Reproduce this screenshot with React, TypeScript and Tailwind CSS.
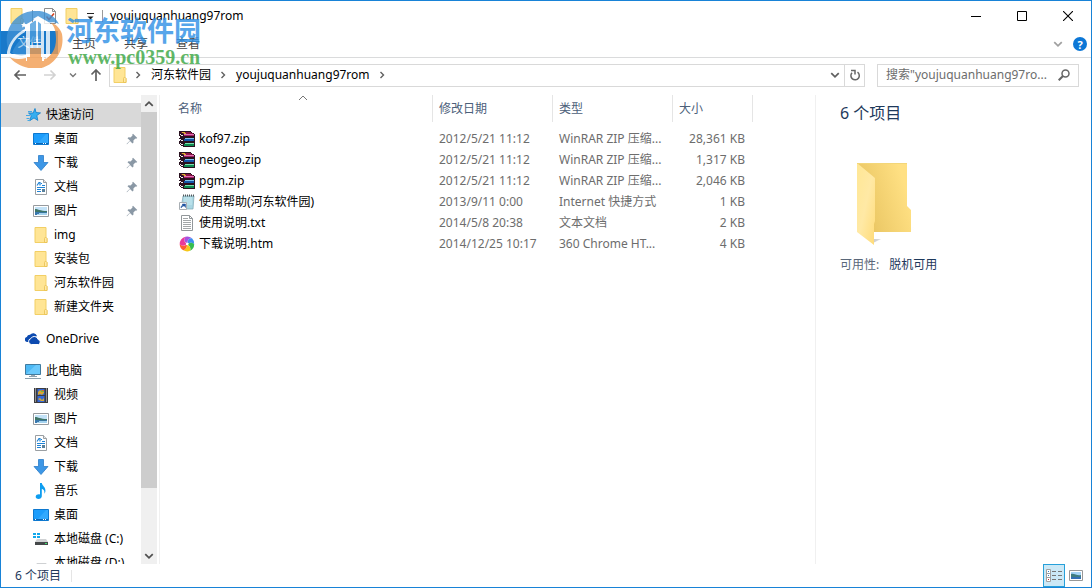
import React from "react";

type IconProps = { className?: string };

const Folder = ({ className = "h-4 w-4" }: IconProps) => (
  <svg viewBox="0 0 16 16" className={className} aria-hidden="true">
    <path d="M2 .5h11v10l1 1v4H2z" fill="#ffe595" stroke="#f2cf65" />
    <path d="M11.500 15.500v-4l1-1.500 1.500 1.500v4z" fill="#ffe9a8" stroke="#e9c04e" strokeWidth=".8" />
  </svg>
);

const Star = () => (
  <svg viewBox="0 0 16 16" className="h-4 w-4" aria-hidden="true">
    <path d="M10 1.500l1 4 4.500.4-3.700 2.600 1 4.900-3.800-2.500-4.300 2.800 1.600-5L3.500 6h4.700z" fill="#36aef0" stroke="#1b86cf" strokeWidth=".9" />
    <path d="M3 4.500h4M1 8.500h4M1.500 11.500h3M2.500 13.500h2" stroke="#45a9e4" strokeWidth="1" />
  </svg>
);

const Desktop = () => (
  <svg viewBox="0 0 16 16" className="h-4 w-4" aria-hidden="true">
    <path d="M.5 2.500h15v11H.5z" fill="#1c9dfc" stroke="#0d78cf" />
    <path d="M5 12L13 3h2v9z" fill="#3fb0ff" opacity=".6" />
    <path d="M1 12.500h14" stroke="#0b66b5" />
    <path d="M2 12.500h1M10 12.500h1M12 12.500h1" stroke="#fff" />
  </svg>
);

const Download = () => (
  <svg viewBox="0 0 16 16" className="h-4 w-4" aria-hidden="true">
    <path d="M5.500 .5h5v7h4.500L8 15.500 1 7.500h4.500z" fill="#3d97e6" stroke="#2b7cc9" strokeWidth=".8" />
  </svg>
);

const Doc = () => (
  <svg viewBox="0 0 16 16" className="h-4 w-4" aria-hidden="true">
    <path d="M2.500 .5h8l3 3v12h-11z" fill="#fff" stroke="#9a9fa3" />
    <path d="M10.500 .5v3h3" fill="#e8e8e8" stroke="#9a9fa3" />
    <path d="M4 6.500l2-3h1v3M8 4.500h1M9 6.500h3M4 8.500h8M4 10.500h4M4 12.500h4" stroke="#1f83d6" strokeWidth="1.200" fill="none" />
    <path d="M9 10h3v3H9z" fill="#59809b" />
  </svg>
);

const Picture = () => (
  <svg viewBox="0 0 16 16" className="h-4 w-4" aria-hidden="true">
    <path d="M.5 2.500h15v11H.5z" fill="#fff" stroke="#969a9e" />
    <path d="M2 4h12v8H2z" fill="#c3e2f7" />
    <path d="M2 6c3 0 5 2 12 2v2H2z" fill="#3f7567" />
    <path d="M2 9c4 0 7 .5 12 0v3H2z" fill="#3a78ad" />
    <path d="M6 10.500h8M4 11.500h10" stroke="#a4d2ee" />
  </svg>
);

const Cloud = () => (
  <svg viewBox="0 0 16 16" className="h-4 w-4" aria-hidden="true">
    <path d="M4 11H2a2.500 2.500 0 0 1-.2-4.900A3.300 3.300 0 0 1 5 3.800 4 4 0 0 1 12 5" fill="#0c4ab0" />
    <path d="M6.500 13.500a3 3 0 0 1-.7-5.900 3.900 3.900 0 0 1 7.300.9 2.600 2.600 0 0 1 .4 5z" fill="#0c4ab0" stroke="#fff" strokeWidth="1" />
  </svg>
);

const Computer = () => (
  <svg viewBox="0 0 16 16" className="h-4 w-4" aria-hidden="true">
    <path d="M.5 1.500h15v10H.5z" fill="#4db9f5" stroke="#417b9f" />
    <path d="M1 11L11 2h4v9z" fill="#77d0ff" opacity=".7" />
    <path d="M6 12h4v1H6z" fill="#9aa8b2" />
    <path d="M4 13.500h8M0 15.500h16" stroke="#8ba0ae" />
  </svg>
);

const Video = () => (
  <svg viewBox="0 0 16 16" className="h-4 w-4" aria-hidden="true">
    <path d="M1 1h14v15H1z" fill="#3c3c3f" />
    <path d="M2.500 1.500v14M13.500 1.500v14" stroke="#e8e8e8" strokeDasharray="1 1" />
    <path d="M4.500 2h7v6h-7zM4.500 9h7v6h-7z" fill="#3568d8" />
    <path d="M5 5l2-2 2 2 2-2v3L9 8 7 7 5 8zM5 12l2-1 2 2 2-2v3H8z" fill="#d8a631" />
    <path d="M8 3h3v2H8z" fill="#7db33d" />
    <path d="M9 3h2v1H9z" fill="#e25a36" />
  </svg>
);

const Music = () => (
  <svg viewBox="0 0 16 16" className="h-4 w-4" aria-hidden="true">
    <path d="M7 0h1.800c.4 3 4.200 4 3.600 8.500-.1.900-.6 1.700-1.100 2.200.6-2.800-.5-4-2.500-5v7.500c0 1.600-1.500 2.800-3.300 2.800S2.500 15 2.700 13.500c.2-1.700 2.400-2.700 4.300-2z" fill="#0d9df0" />
  </svg>
);

const Drive = ({ system = false }: { system?: boolean }) => (
  <svg viewBox="0 0 16 16" className="h-4 w-4" aria-hidden="true">
    {system && <path d="M0 2h3v2H0zM4 2h3v2H4zM0 5h3v2H0zM4 5h3v2H4z" fill="#12a8ec" />}
    <path d="M4 8h9l2 3H2z" fill="#cfd1d3" />
    <path d="M2 11h13v3H2z" fill="#45484a" />
    <path d="M12 12.500h2" stroke="#3ee06c" />
  </svg>
);

const Pin = () => (
  <svg viewBox="0 0 12 12" className="h-3 w-3" aria-hidden="true">
    <path d="M7 .8L11.300 5l-1.200.7-.7-.2-2 2 .1 2-1 1L4 8 1 11.200.5 11 4 7.500 1.500 5.200l1-.9 2 .1 2-2-.2-.8z" fill="#8a98a5" />
  </svg>
);

const Rar = () => (
  <svg viewBox="0 0 16 16" className="h-4 w-4" shapeRendering="crispEdges" aria-hidden="true">
    <path d="M0 0h11l5 3v3l-1 1 1 1v3l-1 1 1 1v3H5l-5-3v-3l1-1-1-1V7l1-1-1-1z" fill="#2a1220" />
    <path d="M1 1h10l4 2H5z" fill="#8a1446" />
    <path d="M5 3h10v1H5z" fill="#e072b5" />
    <path d="M5 4h10v1H5z" fill="#a01b62" />
    <path d="M6 7h9v1H6z" fill="#7cc4ee" />
    <path d="M5 8h10v2H5z" fill="#1456a8" />
    <path d="M6 12h9v1H6z" fill="#7ce0ae" />
    <path d="M5 13h10v2H5z" fill="#0d8a50" />
    <path d="M1 3h1v1H1zM2 4h2v1H2zM1 8h1v1H1zM2 9h2v1H2zM1 12h1v1H1zM2 13h2v1H2z" fill="#f3edf2" />
    <path d="M3 1h3v1H3zM5 2h2v1H5z" fill="#d9b52e" />
  </svg>
);

const Shortcut = () => (
  <svg viewBox="0 0 16 16" className="h-4 w-4" aria-hidden="true">
    <path d="M4 2h11l-1 13H2z" fill="#a9d6e2" stroke="#7fa6b1" strokeWidth=".7" />
    <path d="M5 4h8M5 6h8M5 8h8M5 10h8" stroke="#d7f3f8" strokeWidth=".7" />
    <path d="M4 1.500h11" stroke="#51585c" strokeWidth="2" strokeDasharray="1 1" />
    <path d="M.5 8.500h7v7h-7z" fill="#fff" stroke="#a8aeb3" />
    <path d="M2 14c0-2 1-3 2.500-3H3.500v-1H6.500v3.500L5.500 12C4 12 3 12.500 2 14z" fill="#2155a0" stroke="#2155a0" strokeWidth=".5" />
  </svg>
);

const TextFile = () => (
  <svg viewBox="0 0 16 16" className="h-4 w-4" aria-hidden="true">
    <path d="M2.500 .5h8l3 3v12h-11z" fill="#fff" stroke="#92979a" />
    <path d="M10.500 .5v3h3" fill="none" stroke="#92979a" />
    <path d="M4 3.500h5M4 5.500h8M4 7.500h8M4 9.500h8M4 11.500h8M4 13.500h8" stroke="#a2a6a8" />
  </svg>
);

const Browser = () => (
  <svg viewBox="0 0 16 16" className="h-4 w-4" aria-hidden="true">
    <path d="M8 7C5 6.500 4.500 3 6.500.7A7.300 7.300 0 0 1 13 2.300C10.500 2 8.500 4 8.500 6.500z" fill="#a552e0" />
    <path d="M8.500 7C8.500 4 10.500 1.900 13 2.300A7.300 7.300 0 0 1 15.200 8.500C14 6.500 11 6 9 7.500z" fill="#3d8ff0" />
    <path d="M9 8c2-2 5-1.500 6.200.5A7.300 7.300 0 0 1 11 14.800C12 12.500 11 10 9 9z" fill="#35bd50" />
    <path d="M8.800 9c2.200 1 3.200 3.500 2.200 5.800A7.300 7.300 0 0 1 4.300 14.300C6.500 13.500 8 11.500 8 9.200z" fill="#f5c719" />
    <path d="M8 9c0 2.500-1.500 4.500-3.700 5.300A7.300 7.300 0 0 1 .7 8.500C2.500 10 5.500 10 7.300 8.700z" fill="#ff5a32" />
    <path d="M7.300 8.500C5.500 10 2.500 10 .7 8.500A7.300 7.300 0 0 1 6.500.7C4.700 3 5 6 7.500 7.300z" fill="#e9389a" />
    <circle cx="8.200" cy="8" r="1.300" fill="#fff" />
  </svg>
);

const Arrow = ({ className }: IconProps) => (
  <svg viewBox="0 0 14 14" className={className} fill="none" stroke="currentColor" strokeWidth="1.700" aria-hidden="true">
    <path d="M13 7H2M6.500 2.500L2 7l4.500 4.500" />
  </svg>
);

const Chevron = ({ className }: IconProps) => (
  <svg viewBox="0 0 8 8" className={className} fill="none" stroke="currentColor" strokeWidth="1.400" aria-hidden="true">
    <path d="M1 2.500l3 3 3-3" />
  </svg>
);

type NavEntry = { label: string; icon: React.ReactNode; pinned?: boolean };

const quickItems: NavEntry[] = [
  { label: "桌面", icon: <Desktop />, pinned: true },
  { label: "下载", icon: <Download />, pinned: true },
  { label: "文档", icon: <Doc />, pinned: true },
  { label: "图片", icon: <Picture />, pinned: true },
  { label: "img", icon: <Folder /> },
  { label: "安装包", icon: <Folder /> },
  { label: "河东软件园", icon: <Folder /> },
  { label: "新建文件夹", icon: <Folder /> },
];

const computerItems: NavEntry[] = [
  { label: "视频", icon: <Video /> },
  { label: "图片", icon: <Picture /> },
  { label: "文档", icon: <Doc /> },
  { label: "下载", icon: <Download /> },
  { label: "音乐", icon: <Music /> },
  { label: "桌面", icon: <Desktop /> },
  { label: "本地磁盘 (C:)", icon: <Drive system /> },
  { label: "本地磁盘 (D:)", icon: <Drive /> },
];

const files = [
  { name: "kof97.zip", date: "2012/5/21 11:12", type: "WinRAR ZIP 压缩...", size: "28,361 KB", icon: <Rar /> },
  { name: "neogeo.zip", date: "2012/5/21 11:12", type: "WinRAR ZIP 压缩...", size: "1,317 KB", icon: <Rar /> },
  { name: "pgm.zip", date: "2012/5/21 11:12", type: "WinRAR ZIP 压缩...", size: "2,046 KB", icon: <Rar /> },
  { name: "使用帮助(河东软件园)", date: "2013/9/11 0:00", type: "Internet 快捷方式", size: "1 KB", icon: <Shortcut /> },
  { name: "使用说明.txt", date: "2014/5/8 20:38", type: "文本文档", size: "2 KB", icon: <TextFile /> },
  { name: "下载说明.htm", date: "2014/12/25 10:17", type: "360 Chrome HT...", size: "4 KB", icon: <Browser /> },
];

function NavRoot({ label, icon, active = false }: { label: string; icon: React.ReactNode; active?: boolean }) {
  return (
    <a href="#" className={`flex h-6 items-center gap-1 pl-6 ${active ? "bg-[#d9d9d9]" : ""}`}>
      {icon}
      <span className="pl-px">{label}</span>
    </a>
  );
}

function NavList({ items }: { items: NavEntry[] }) {
  return (
    <ul>
      {items.map((item) => (
        <li key={item.label}>
          <a href="#" className="flex h-6 items-center gap-1 whitespace-nowrap pl-8 pr-[3px]">
            {item.icon}
            <span className="flex-1 pl-px">{item.label}</span>
            {item.pinned && <Pin />}
          </a>
        </li>
      ))}
    </ul>
  );
}

function TitleBar() {
  return (
    <header className="flex h-[30px] shrink-0 items-center pl-2 text-black">
      <Folder />
      <span className="mx-[7px] h-3 w-px bg-[#9a9a9a]" />
      <button aria-label="属性" className="ml-0.5">
        <svg viewBox="0 0 16 16" className="h-4 w-4">
          <path d="M2.500 .5h8l3 3v12h-11z" fill="#fff" stroke="#8d8d8d" />
          <path d="M10.500 .5v3h3" fill="none" stroke="#8d8d8d" />
          <path d="M4.500 8.500l2.500 3 5-6" fill="none" stroke="#d8421f" strokeWidth="1.600" />
        </svg>
      </button>
      <button aria-label="新建文件夹" className="ml-1.5">
        <Folder />
      </button>
      <button aria-label="自定义快速访问工具栏" className="ml-1.5">
        <svg viewBox="0 0 9 9" className="h-[9px] w-[9px]">
          <path d="M1 1.500h7" stroke="#222" />
          <path d="M1.500 4.500h6l-3 3z" fill="#222" />
        </svg>
      </button>
      <span className="mx-[7px] h-3 w-px bg-[#9a9a9a]" />
      <h1>youjuquanhuang97rom</h1>
      <div className="ml-auto flex h-full">
        <button aria-label="最小化" className="flex w-[46px] items-center justify-center">
          <svg viewBox="0 0 10 10" className="h-2.5 w-2.5" stroke="#000"><path d="M0 5.500h10" /></svg>
        </button>
        <button aria-label="最大化" className="flex w-[46px] items-center justify-center">
          <svg viewBox="0 0 10 10" className="h-2.5 w-2.5" fill="none" stroke="#000"><path d="M.5 .5h9v9h-9z" /></svg>
        </button>
        <button aria-label="关闭" className="flex w-[46px] items-center justify-center">
          <svg viewBox="0 0 10 10" className="h-2.5 w-2.5" stroke="#000" strokeWidth="1.100"><path d="M0 0l10 10M10 0L0 10" /></svg>
        </button>
      </div>
    </header>
  );
}

function Ribbon() {
  return (
    <nav className="flex h-[27px] shrink-0 border-b border-[#dadbdc] text-[#444]">
      <button className="h-[23px] w-[57px] bg-[#1979ca] text-white">文件</button>
      <button className="h-[25px] w-[52px]">主页</button>
      <button className="h-[25px] w-[52px]">共享</button>
      <button className="h-[25px] w-[52px]">查看</button>
      <div className="ml-auto flex items-center gap-2.5 pr-1">
        <button aria-label="展开功能区" className="text-[#a0a0a0]"><Chevron className="h-2.5 w-2.5" /></button>
        <button aria-label="帮助" className="flex h-3.5 w-3.5 items-center justify-center rounded-full bg-[#0c77d6] text-[11px] font-bold leading-none text-white">?</button>
      </div>
    </nav>
  );
}

function AddressBar() {
  return (
    <div className="flex h-[34px] shrink-0 items-center pl-3 pr-3">
      <button aria-label="后退" className="text-[#606060]"><Arrow className="h-3.5 w-3.5" /></button>
      <button aria-label="前进" className="ml-4 text-[#d2d2d2]"><Arrow className="h-3.5 w-3.5 rotate-180" /></button>
      <button aria-label="最近位置" className="ml-3 text-[#777]"><Chevron className="h-2 w-2" /></button>
      <button aria-label="向上" className="ml-3 text-[#606060]"><Arrow className="h-3.5 w-3.5 rotate-90" /></button>
      <div className="ml-1.5 flex h-[23px] flex-1 items-center border border-[#d9d9d9] pl-0.5 text-black">
        <Folder />
        <Chevron className="ml-1.5 h-2 w-2 -rotate-90 text-[#606060]" />
        <a href="#" className="ml-[9px]">河东软件园</a>
        <Chevron className="ml-2 h-2 w-2 -rotate-90 text-[#606060]" />
        <a href="#" className="ml-[9px]">youjuquanhuang97rom</a>
        <Chevron className="ml-2 h-2 w-2 -rotate-90 text-[#606060]" />
        <button aria-label="以前的位置" className="ml-auto mr-1 text-[#606060]"><Chevron className="h-2.5 w-2.5" /></button>
        <button aria-label="刷新" className="flex h-full w-5 items-center justify-center border-l border-[#d9d9d9]">
          <svg viewBox="0 0 12 12" className="h-3 w-3" fill="none" stroke="#666" strokeWidth="1.500">
            <path d="M8.500 3.200A4.200 4.200 0 1 1 3 3.800" />
            <path d="M2 1.500h4v4" />
          </svg>
        </button>
      </div>
      <label className="ml-3 flex h-[23px] w-[202px] items-center border border-[#d9d9d9] pl-2 pr-2">
        <input
          aria-label="搜索"
          placeholder={'搜索"youjuquanhuang97ro...'}
          className="min-w-0 flex-1 bg-transparent outline-none placeholder:text-[#6d6d6d]"
        />
        <svg viewBox="0 0 12 12" className="h-3 w-3" fill="none" stroke="#666" strokeWidth="1.500" aria-hidden="true">
          <circle cx="7.500" cy="4.500" r="3.500" />
          <path d="M5 7L.7 11.300" strokeWidth="2" />
        </svg>
      </label>
    </div>
  );
}

function Sidebar() {
  return (
    <aside className="flex w-[159px] shrink-0 border-r border-[#f0f0f0] text-black">
      <nav className="min-h-0 flex-1 overflow-hidden pt-2">
        <NavRoot label="快速访问" icon={<Star />} active />
        <NavList items={quickItems} />
        <div className="mt-2"><NavRoot label="OneDrive" icon={<Cloud />} /></div>
        <div className="mt-2"><NavRoot label="此电脑" icon={<Computer />} /></div>
        <NavList items={computerItems} />
      </nav>
      <div className="mr-0.5 flex w-4 flex-col bg-[#f0f0f0] text-[#505050]">
        <button aria-label="向上滚动" className="flex h-[17px] items-center justify-center"><Chevron className="h-2.5 w-2.5 rotate-180" /></button>
        <div className="flex flex-1 flex-col">
          <div className="h-[86.5%] bg-[#cdcdcd]" />
        </div>
        <button aria-label="向下滚动" className="flex h-[17px] items-center justify-center"><Chevron className="h-2.5 w-2.5" /></button>
      </div>
    </aside>
  );
}

function FileTable() {
  return (
    <main className="min-w-0 flex-1 overflow-hidden">
      <table className="w-[593px] table-fixed border-separate border-spacing-0 text-left">
        <colgroup>
          <col className="w-[273px]" />
          <col className="w-[120px]" />
          <col className="w-[120px]" />
          <col className="w-[80px]" />
        </colgroup>
        <thead className="text-[#4c607a]">
          <tr className="h-[27px]">
            <th className="relative border-r border-[#e5e5e5] p-0 pl-[18px] font-normal">
              名称
              <svg viewBox="0 0 10 6" className="absolute left-[138px] top-0 h-1.5 w-2.5" fill="none" stroke="#777"><path d="M1 5l4-4 4 4" /></svg>
            </th>
            <th className="border-r border-[#e5e5e5] p-0 pl-1.5 font-normal">修改日期</th>
            <th className="border-r border-[#e5e5e5] p-0 pl-1.5 font-normal">类型</th>
            <th className="border-r border-[#e5e5e5] p-0 pl-1.5 font-normal">大小</th>
          </tr>
        </thead>
        <tbody className="text-[#6d6d6d]">
          <tr className="h-1.5"><td colSpan={4} className="p-0" /></tr>
          {files.map((file) => (
            <tr key={file.name} className="h-[21px] whitespace-nowrap">
              <td className="p-0 pl-[19px] text-black">
                <a href="#" className="flex items-center gap-1">{file.icon}{file.name}</a>
              </td>
              <td className="p-0 pl-1.5">{file.date}</td>
              <td className="p-0 pl-1.5">{file.type}</td>
              <td className="p-0 pr-2 text-right">{file.size}</td>
            </tr>
          ))}
        </tbody>
      </table>
    </main>
  );
}

function DetailsPane() {
  return (
    <aside className="w-[276px] shrink-0 border-l border-[#f0f0f0] pl-6 pt-1.5 text-[#1e395b]">
      <h2 className="text-base leading-6">6 个项目</h2>
      <svg viewBox="0 0 64 88" className="ml-4 mt-9 h-[88px] w-16" aria-hidden="true">
        <defs>
          <linearGradient id="folderBack" x1="0" y1="1" x2="1" y2=".6">
            <stop offset="0" stopColor="#e2b84f" />
            <stop offset=".35" stopColor="#edca68" />
            <stop offset="1" stopColor="#ffe083" />
          </linearGradient>
          <linearGradient id="folderFront" x1="0" y1="0" x2="1" y2="1">
            <stop offset="0" stopColor="#ffe795" />
            <stop offset=".5" stopColor="#ffe9a5" />
            <stop offset="1" stopColor="#ffdb78" />
          </linearGradient>
          <linearGradient id="folderShade" x1="0" y1="0" x2="1" y2="0">
            <stop offset="0" stopColor="#ccc" />
            <stop offset="1" stopColor="#fff" stopOpacity="0" />
          </linearGradient>
        </defs>
        <path d="M17 82l8-4h-7zM54 70l9-3-8-1z" fill="url(#folderShade)" />
        <path d="M1 2h50v43l4 4v22H1z" fill="url(#folderBack)" />
        <path d="M1 2l18 15v43l-1 3v21L1 71z" fill="url(#folderFront)" />
        <path d="M1 2.500h50" stroke="#f3d679" />
      </svg>
      <dl className="mt-2 flex gap-2.5">
        <dt className="text-[#5a6779]">可用性:</dt>
        <dd>脱机可用</dd>
      </dl>
    </aside>
  );
}

function StatusBar() {
  return (
    <footer className="flex h-[23px] shrink-0 items-center pl-3.5 text-[#1e395b]">
      <span>6 个项目</span>
      <span className="ml-2.5 h-3 w-px bg-[#e5e5e5]" />
      <div className="ml-auto flex h-full items-center pr-2">
        <button aria-label="详细信息" className="flex h-full w-[22px] items-center justify-center border border-[#26a0da] bg-[#cbe8f6]">
          <svg viewBox="0 0 16 13" className="h-[13px] w-4" fill="none">
            <path d="M.5 .5h4v12h-4zM.5 4.500h4M.5 8.500h4" fill="#fff" stroke="#a0a0a0" />
            <path d="M6 2.500h4M12 2.500h4M6 6.500h4M12 6.500h4M6 10.500h4M12 10.500h4" stroke="#767676" />
            <path d="M2 2.500h1M2 6.500h1" stroke="#2c7cc2" />
            <path d="M2 10.500h1" stroke="#c62b2b" />
          </svg>
        </button>
        <button aria-label="大缩略图" className="ml-1">
          <svg viewBox="0 0 14 11" className="h-[11px] w-3.5">
            <path d="M.5 .5h13v10H.5z" fill="#fff" stroke="#989898" />
            <path d="M2 2h10v7H2z" fill="#a5d4f6" />
            <path d="M2 4c3-1 6 2 10 1v4H2z" fill="#407d80" />
            <path d="M2 7h10v2H2z" fill="#3470b6" />
          </svg>
        </button>
      </div>
    </footer>
  );
}

function Watermark() {
  return (
    <div className="pointer-events-none absolute left-1 top-2.5 flex items-start opacity-80">
      <svg viewBox="0 0 58 58" className="h-[58px] w-[58px]" aria-hidden="true">
        <path d="M4 40C-2 26 4 10 17 3 32-4 48 1 54 13c-4-2-8-2-11-1L32 7 20 14v6C12 24 6 31 4 40z" fill="#3c8fd4" />
        <path d="M46 12c5 1 9 5 11 11 3 16-7 31-21 34H24C15 55 8 51 4 45c5 2 13 3 20 1V35h14v14c9-4 13-11 13-21 0-7-1-12-5-16z" fill="#f29c4f" />
        <path d="M7 42c3-8 8-14 14-17v19c-5 1-10 0-14-2z" fill="#4b9ddd" opacity=".6" />
        <path d="M2 41C4 31 11 22 20 18v3C12 25 6 33 5 42c4 3 11 4 16 2v3C13 49 6 48 2 44z" fill="#fff" />
        <path d="M21 17l4-3v20h11V12l3 1v37h-3V37H25v13h-4z" fill="#fff" />
        <path d="M25 13l6-4 5 4v18H25z" fill="#4b9ddd" />
        <path d="M28 8l5-3 12 7v32l-4 4V14l-8-5v22h-2V10z" fill="#fff" />
        <path d="M19 11l1 2h2l-1.500 1.500.5 2-2-1-2 1 .5-2L16 13h2z" fill="#fff" />
        <path d="M22 46h15v11H24l-2-1z" fill="#f29c4f" />
      </svg>
      <div className="ml-[3px] flex flex-col">
        <span className="font-['Noto_Sans_CJK_SC',sans-serif] text-[27px] font-bold leading-[37px] text-[#2d8fe5]">河东软件园</span>
        <span className="pl-0.5 font-['Liberation_Serif',serif] text-xl font-bold leading-[18px] text-[#39a642]">www.pc0359.cn</span>
      </div>
    </div>
  );
}

export default function App() {
  return (
    <div className="relative flex h-screen flex-col overflow-hidden border border-[#1883d7] bg-white font-['Noto_Sans','Noto_Sans_CJK_SC',sans-serif] text-xs leading-4">
      <TitleBar />
      <Ribbon />
      <AddressBar />
      <div className="flex min-h-0 flex-1 pt-[3px]">
        <Sidebar />
        <FileTable />
        <DetailsPane />
      </div>
      <StatusBar />
      <Watermark />
    </div>
  );
}
